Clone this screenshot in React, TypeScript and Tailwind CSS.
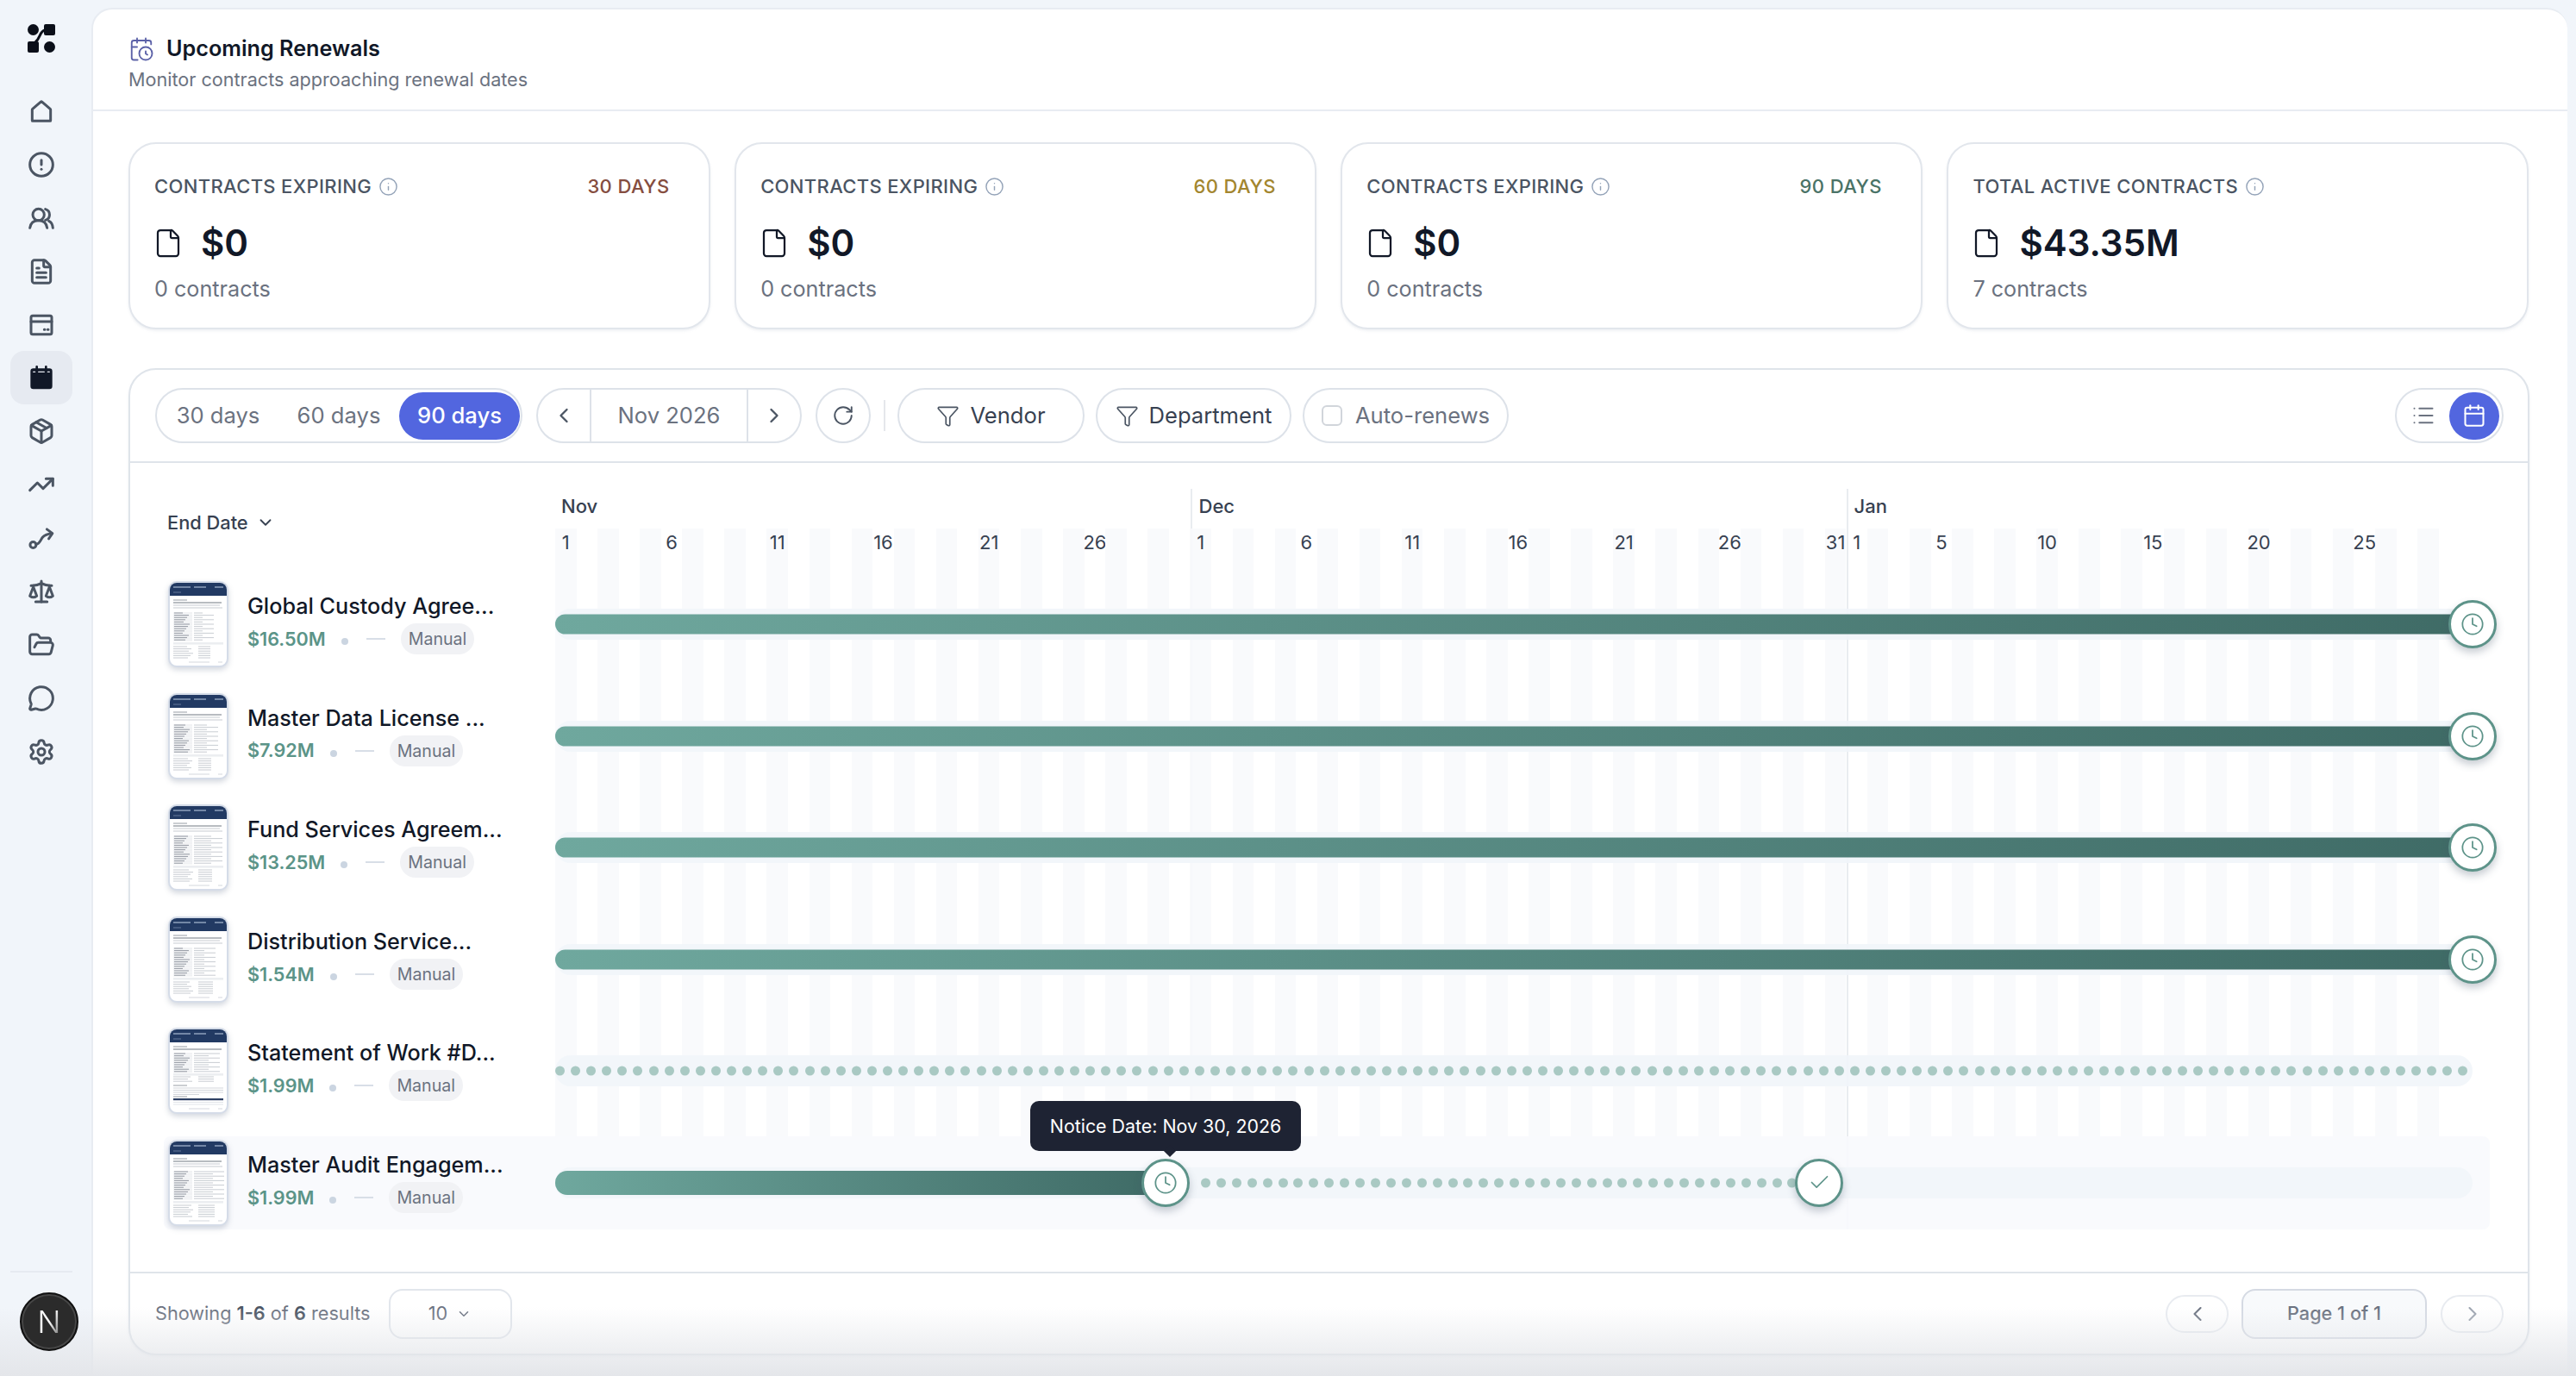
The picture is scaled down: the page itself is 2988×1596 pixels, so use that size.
import {
  CalendarClock,
  Check,
  ChevronDown,
  ChevronLeft,
  ChevronRight,
  CircleAlert,
  Clock,
  File,
  FileText,
  Filter,
  FolderOpen,
  Info,
  List,
  MessageCircle,
  Package,
  RotateCw,
  Scale,
  Settings,
  TrendingUp,
  Calendar,
} from 'lucide-react';

const DAY = 24.55;
const days = Array.from({ length: 90 }, (_, i) => i);
const dayLabels: Record<number, string> = {
  0: '1', 5: '6', 10: '11', 15: '16', 20: '21', 25: '26',
  30: '1', 35: '6', 40: '11', 45: '16', 50: '21', 55: '26', 60: '31',
  61: '1', 65: '5', 70: '10', 75: '15', 80: '20', 85: '25',
};

const rows = [
  { title: 'Global Custody Agree...', amount: '$16.50M', seed: 0 },
  { title: 'Master Data License ...', amount: '$7.92M', seed: 1 },
  { title: 'Fund Services Agreem...', amount: '$13.25M', seed: 2 },
  { title: 'Distribution Service...', amount: '$1.54M', seed: 3 },
  { title: 'Statement of Work #D...', amount: '$1.99M', seed: 4 },
  { title: 'Master Audit Engagem...', amount: '$1.99M', seed: 5 },
];

const stats = [
  { label: 'CONTRACTS EXPIRING', tag: '30 DAYS', tagColor: 'text-[#854d40]', value: '$0', count: '0 contracts' },
  { label: 'CONTRACTS EXPIRING', tag: '60 DAYS', tagColor: 'text-[#a3862f]', value: '$0', count: '0 contracts' },
  { label: 'CONTRACTS EXPIRING', tag: '90 DAYS', tagColor: 'text-[#4a7367]', value: '$0', count: '0 contracts' },
  { label: 'TOTAL ACTIVE CONTRACTS', tag: '', tagColor: '', value: '$43.35M', count: '7 contracts' },
];

const Logo = () => (
  <svg width="32" height="33" viewBox="0 0 32 33" fill="#0b0f19">
    <circle cx="6.5" cy="6.5" r="6.5" />
    <rect x="19" y="0" width="13" height="13" rx="2" />
    <rect x="0" y="20" width="13" height="13" rx="2" />
    <circle cx="25.5" cy="26.5" r="6.5" />
    <path d="M20 7c-6 1-5 9-11 14" fill="none" stroke="#0b0f19" strokeWidth="3" />
  </svg>
);

const navIcon = 'w-8 h-8 text-[#4b5563]';

const HomeIcon = () => (
  <svg className={navIcon} viewBox="0 0 24 24" fill="none" stroke="currentColor" strokeWidth="2.25" strokeLinejoin="round">
    <path d="M4.5 20.5h15a.5.5 0 0 0 .5-.5v-9.3a.8.8 0 0 0-.3-.6l-7.2-6.3a.8.8 0 0 0-1 0l-7.2 6.3a.8.8 0 0 0-.3.6V20a.5.5 0 0 0 .5.5z" />
  </svg>
);

const PeopleIcon = () => (
  <svg className={navIcon} viewBox="0 0 24 24" fill="none" stroke="currentColor" strokeWidth="2.25" strokeLinecap="round">
    <circle cx="9.5" cy="9" r="5" />
    <path d="M2 20.5c.5-3.8 3-6.5 7.5-6.5s7 2.7 7.5 6.5" />
    <path d="M15.5 4.2a5 5 0 0 1 0 9.6" />
    <path d="M18.5 14.6c2.1.9 3.2 3 3.5 5.9" />
  </svg>
);

const CardIcon = () => (
  <svg className={navIcon} viewBox="0 0 24 24" fill="none" stroke="currentColor" strokeWidth="2.25" strokeLinecap="round">
    <rect x="3" y="4" width="18" height="16" rx="1.5" />
    <path d="M3 9h18" />
    <path d="M14.5 16h.5M17.5 16h.5" />
  </svg>
);

const CalendarFilled = () => (
  <svg className="w-8 h-8" viewBox="0 0 24 24" fill="#111827" stroke="#111827" strokeWidth="2" strokeLinecap="round">
    <rect x="3.5" y="5" width="17" height="16" rx="1.5" />
    <path d="M8 2.5V6M16 2.5V6" />
    <path d="M5 7h1.5M9.5 7h5M17.5 7H19" stroke="#e6eaf1" strokeWidth="1" />
  </svg>
);

const RouteIcon = () => (
  <svg className={navIcon} viewBox="0 0 24 24" fill="none" stroke="currentColor" strokeWidth="2.25" strokeLinecap="round" strokeLinejoin="round">
    <circle cx="4.8" cy="18" r="2.6" />
    <path d="M7.4 17.5c3.4-.4 3.6-3.6 5.6-6 1.8-2.2 4.4-3 8-3.4" />
    <path d="M16.8 4.4 21.6 8l-3.2 4.6" />
  </svg>
);

const Thumb = ({ seed }: { seed: number }) => {
  const lines = Array.from({ length: 20 }, (_, i) => i);
  const sow = seed === 4;
  const start = sow ? 27 : 34;
  return (
    <div className="w-[70px] h-[100px] shrink-0 rounded-[10px] border-2 border-[#d5dce8] bg-white overflow-hidden shadow-[0_3px_6px_rgba(100,116,139,0.28)]">
      <svg width="66" height="96" viewBox="0 0 66 96" className="block">
        <rect width="66" height="15" fill="#223a63" />
        <path d="M4 5h20M28 5h14M52 5h10" stroke="#8fa1bd" strokeWidth="1.4" />
        <path d="M4 11h9" stroke="#64799c" strokeWidth="1" />
        <path d="M4 20h16" stroke="#6b7280" strokeWidth="0.7" />
        <path d="M4 23h56" stroke="#4b5563" strokeWidth="0.8" />
        {!sow && <path d="M4 26h54M4 29h57" stroke="#a3a9b4" strokeWidth="0.6" />}
        {lines.slice(0, sow ? 9 : 13).map((i) => (
          <g key={i}>
            <rect x="4" y={start + i * 2.6} width="22" height="2.4" fill="#f1f2f4" />
            <path d={`M5 ${start + 1 + i * 2.6}h${10 + ((i * 7 + seed * 3) % 9)}`} stroke="#6b7280" strokeWidth="0.7" />
            <path d={`M28 ${start + 1 + i * 2.6}h${10 + ((i * 13 + seed * 5) % 26)}`} stroke="#a3a9b4" strokeWidth="0.6" />
          </g>
        ))}
        <rect x="4" y={sow ? 51 : 69} width="58" height="2.6" fill="#eceef1" />
        {lines.slice(0, sow ? 3 : 6).map((i) => (
          <g key={i}>
            <path d={`M4 ${(sow ? 55 : 74) + i * 2.6}h${16 + ((i * 5 + seed) % 8)}`} stroke="#a3a9b4" strokeWidth="0.6" />
            <path d={`M33 ${(sow ? 55 : 74) + i * 2.6}h${14 + ((i * 9 + seed) % 9)}`} stroke="#a3a9b4" strokeWidth="0.6" />
          </g>
        ))}
        {sow && (
          <>
            <path d="M4 65h16" stroke="#6b7280" strokeWidth="0.7" />
            <path d="M4 68h58M4 70.5h58M4 73h58M4 75.5h30" stroke="#b6bbc4" strokeWidth="0.6" />
            <path d="M4 78h16" stroke="#6b7280" strokeWidth="0.7" />
            <rect x="4" y="80" width="58" height="2.2" fill="#2d3f63" />
            <path d="M4 84.5h58M4 87h58" stroke="#cfd3da" strokeWidth="0.6" />
          </>
        )}
        <path d="M22 92h24M56 92h5" stroke="#c1c6ce" strokeWidth="0.7" />
      </svg>
    </div>
  );
};

const Handle = ({ check, className }: { check?: boolean; className: string }) => (
  <div
    className={`absolute top-1/2 -translate-y-1/2 w-[56px] h-[56px] rounded-full bg-white border-[3.5px] border-[#5d9389] flex items-center justify-center text-[#5d9389] shadow-[0_5px_10px_rgba(71,85,105,0.3)] z-10 ${className}`}
  >
    {check ? <Check size={27} strokeWidth={1.5} /> : <Clock size={28} strokeWidth={1.5} />}
  </div>
);

const Dots = ({ count, className }: { count: number; className: string }) => (
  <div className={`absolute top-1/2 -translate-y-1/2 flex justify-between ${className}`}>
    {Array.from({ length: count }, (_, i) => (
      <span key={i} className="w-[11px] h-[11px] rounded-full bg-[#a9c9c3]" />
    ))}
  </div>
);

const FullBar = () => (
  <>
    <div className="absolute left-0 right-0 top-1/2 -translate-y-1/2 h-[23px] rounded-l-full bg-linear-to-r from-[#6fa89e] to-[#3f6b66]" />
    <Handle className="-right-[28px]" />
  </>
);

const StatCard = ({ label, tag, tagColor, value, count }: (typeof stats)[number]) => (
  <div className="flex-1 h-[217px] rounded-[32px] border-2 border-[#e2e6ec] bg-white pl-[28px] pr-[45px] pt-[34px] shadow-[0_2px_3px_rgba(148,163,184,0.15)]">
    <div className="flex items-center justify-between h-[30px]">
      <div className="flex items-center gap-[8px] text-[22px] font-medium tracking-[0.35px] text-[#4b5563]">
        {label}
        <Info size={23} strokeWidth={1.5} className="text-[#94a3b8]" />
      </div>
      {tag && <span className={`text-[22px] font-medium tracking-[0.4px] ${tagColor}`}>{tag}</span>}
    </div>
    <div className="flex items-center gap-[20px] mt-[26px] h-[50px]">
      <File size={36} strokeWidth={1.5} className="text-[#111827] -ml-[2px]" />
      <span className="text-[42px] leading-none font-semibold text-[#111827]">{value}</span>
    </div>
    <div className="mt-[9px] text-[25.2px] leading-[39px] text-[#6b7280]">{count}</div>
  </div>
);

export default function App() {
  return (
    <div className="relative flex w-[2988px] h-[1596px] overflow-hidden bg-[#f1f5fa] font-[Inter,sans-serif]">
      {/* Sidebar */}
      <aside className="w-[106px] shrink-0 flex flex-col items-center relative">
        <div className="h-[101px] pt-[28px] -ml-[10px]">
          <Logo />
        </div>
        <nav className="flex flex-col items-center w-[72px] -ml-[10px]">
          {[
            <HomeIcon key="a" />,
            <CircleAlert key="b" className={navIcon} strokeWidth={2.25} />,
            <PeopleIcon key="c" />,
            <FileText key="d" className={navIcon} strokeWidth={2.25} />,
            <CardIcon key="e" />,
          ].map((icon, i) => (
            <div key={i} className="h-[61.9px] w-full flex items-center justify-center -mt-[3px] mb-[3px]">
              {icon}
            </div>
          ))}
          <div className="h-[61.9px] w-full flex items-center justify-center rounded-2xl bg-[#e6eaf1] -mt-[3px] mb-[3px]">
            <CalendarFilled />
          </div>
          {[
            <Package key="f" className={navIcon} strokeWidth={2.25} />,
            <TrendingUp key="g" className={navIcon} strokeWidth={2.25} />,
            <RouteIcon key="h" />,
            <Scale key="i" className={navIcon} strokeWidth={2.25} />,
            <FolderOpen key="j" className={navIcon} strokeWidth={2.25} />,
            <MessageCircle key="k" className={navIcon} strokeWidth={2.25} />,
            <Settings key="l" className={navIcon} strokeWidth={2.25} />,
          ].map((icon, i) => (
            <div key={i} className="h-[61.9px] w-full flex items-center justify-center -mt-[3px] mb-[3px]">
              {icon}
            </div>
          ))}
        </nav>
        <div className="mt-auto mb-[29px] w-[72px] -ml-[10px] border-t-2 border-[#e6eaf1] pt-[23px] relative z-10">
          <div className="ml-[11px] w-[68px] h-[68px] rounded-full bg-[#2b2b2b] border-2 border-[#111111] shadow-[inset_0_0_0_2px_#474747] flex items-center justify-center text-[36px] font-light">
            <span className="bg-linear-to-br from-white via-white to-white/10 bg-clip-text text-transparent">N</span>
          </div>
        </div>
      </aside>

      {/* Main */}
      <main className="flex-1 mt-[9px] mr-[10px] flex flex-col min-w-0 bg-white rounded-t-[24px] border-l-2 border-t-2 border-[#e8ecf2]">
        <header className="h-[118px] shrink-0 border-b-2 border-[#e8ecf2] pl-[41px] pt-[26px]">
          <div className="flex items-center gap-[14px] h-[40px]">
            <CalendarClock size={30} strokeWidth={1.5} className="text-[#5c62a8]" />
            <h1 className="text-[25.2px] font-semibold text-[#111827]">Upcoming Renewals</h1>
          </div>
          <p className="text-[21.6px] leading-[30px] text-[#6b7280]">Monitor contracts approaching renewal dates</p>
        </header>

        <div className="flex-1 min-h-0 flex flex-col pl-[41px] pr-[44px] pt-[36px] pb-[24px]">
          <div className="flex gap-[28.5px] pr-[1px]">
            {stats.map((s) => (
              <StatCard key={s.tag || s.label} {...s} />
            ))}
          </div>

          <section className="mt-[45px] flex-1 min-h-0 flex flex-col rounded-[32px] border-2 border-[#dfe4ea] bg-white shadow-[0_2px_3px_rgba(148,163,184,0.15)]">
            {/* Toolbar */}
            <div className="h-[108px] shrink-0 flex items-center pl-[29px] pr-[28px] border-b-2 border-[#dfe4ea] text-[25.6px] text-[#6b7280]">
              <div className="w-[426px] h-[64px] rounded-full border-2 border-[#dde2e9] flex items-center px-[1px]">
                <button className="w-[140px] h-[55px]">30 days</button>
                <button className="w-[140px] h-[55px]">60 days</button>
                <button className="w-[140px] h-[55px] rounded-full bg-[#5266df] text-white font-medium">90 days</button>
              </div>
              <div className="ml-[16px] w-[308px] h-[64px] rounded-full border-2 border-[#dde2e9] flex items-center">
                <button className="w-[62px] h-full flex items-center justify-center border-r-2 border-[#dde2e9]">
                  <ChevronLeft size={28} strokeWidth={2} className="text-[#4b5563]" />
                </button>
                <span className="flex-1 text-center">Nov 2026</span>
                <button className="w-[62px] h-full flex items-center justify-center border-l-2 border-[#dde2e9]">
                  <ChevronRight size={28} strokeWidth={2} className="text-[#4b5563]" />
                </button>
              </div>
              <button className="ml-[16px] w-[64px] h-[64px] rounded-full border-2 border-[#dde2e9] flex items-center justify-center">
                <RotateCw size={26} strokeWidth={1.75} className="text-[#4b5563]" />
              </button>
              <div className="ml-[15px] w-[2px] h-[36px] bg-[#e5e7eb]" />
              <button className="ml-[14px] w-[217px] h-[64px] rounded-full border-2 border-[#dde2e9] flex items-center justify-center gap-[12px] text-[#374151]">
                <Filter size={27} strokeWidth={1.5} className="text-[#4b5563]" />
                Vendor
              </button>
              <button className="ml-[13px] w-[227px] h-[64px] rounded-full border-2 border-[#dde2e9] flex items-center justify-center gap-[12px] text-[#374151]">
                <Filter size={27} strokeWidth={1.5} className="text-[#4b5563]" />
                Department
              </button>
              <button className="ml-[13px] w-[239px] h-[64px] rounded-full border-2 border-[#dde2e9] flex items-center justify-center gap-[15px]">
                <span className="w-[24px] h-[24px] rounded-md border-2 border-[#d1d5db] bg-white" />
                Auto-renews
              </button>
              <div className="ml-auto w-[126px] h-[64px] rounded-full border-2 border-[#dde2e9] flex items-center pl-[17px] pr-[3px] justify-between">
                <List size={28} strokeWidth={1.75} className="text-[#6b7280]" />
                <span className="w-[58px] h-[55px] rounded-full bg-[#5266df] flex items-center justify-center">
                  <Calendar size={28} strokeWidth={1.75} className="text-white" />
                </span>
              </div>
            </div>

            {/* Timeline */}
            <div className="relative flex-1 min-h-0">
              {/* month columns sit behind the rows */}
              <div className="absolute left-[493px] top-[30px] h-[859px] flex text-[22px] font-medium text-[#374151]">
                <div className="w-[736.5px] pl-[7px] pt-[4px] leading-[32px]">Nov</div>
                <div className="w-[761px] pl-[8px] pt-[4px] leading-[32px] border-l-2 border-[#e9ecf0]">Dec</div>
                <div className="w-[712px] pl-[7px] pt-[4px] leading-[32px] border-l-2 border-[#e9ecf0]">Jan</div>
              </div>
              {/* day stripes */}
              <div className="absolute left-[493px] top-[76px] h-[813px] flex text-[22px] text-[#374151]">
                {days.map((d) => (
                  <div
                    key={d}
                    className={`h-full shrink-0 flex justify-center whitespace-nowrap leading-[33px] ${d % 2 === 0 && d < 89 ? 'bg-[#f8fafc]/90' : ''}`}
                    style={{ width: DAY }}
                  >
                    {dayLabels[d]}
                  </div>
                ))}
              </div>

              <div className="relative pl-[43px] pt-[54px] h-[133px]">
                <button className="flex items-center gap-[9px] text-[21.8px] leading-[30px] font-medium text-[#374151]">
                  End Date
                  <ChevronDown size={22} strokeWidth={2} />
                </button>
              </div>

              <div className="relative flex flex-col gap-[21.6px] ml-[39px] w-[2698px]">
                {rows.map((row, i) => (
                  <div
                    key={row.title + i}
                    className={`h-[108px] flex items-center rounded-lg ${i === 5 ? 'bg-[#f8fafd]/90' : ''}`}
                  >
                    <div className="w-[454px] shrink-0 flex items-center gap-[22px] pl-[5px]">
                      <Thumb seed={row.seed} />
                      <div className="min-w-0 -mt-[3px]">
                        <div className="text-[25.2px] leading-[34px] font-medium text-[#111827] whitespace-nowrap">{row.title}</div>
                        <div className="flex items-center mt-[3px] h-[36px]">
                          <span className="text-[21.6px] font-semibold text-[#5b9488]">{row.amount}</span>
                          <span className="ml-[18px] mt-[6px] w-[8px] h-[8px] rounded-full bg-[#cbd5e1]" />
                          <span className="ml-[21px] w-[22px] h-[2px] bg-[#d8dee7]" />
                          <span className="ml-[18px] h-[36px] px-[9px] rounded-full bg-[#f1f2f5] text-[19.6px] leading-[36px] text-[#6b7280]">Manual</span>
                        </div>
                      </div>
                    </div>
                    <div className="relative w-[2224px] h-[36px] rounded-full bg-[#f1f5f9]/90">
                      {i < 4 && <FullBar />}
                      {i === 4 && <Dots count={123} className="left-0 right-[4px]" />}
                      {i === 5 && (
                        <>
                          <div className="absolute left-0 top-1/2 -translate-y-1/2 w-[700px] h-[28px] rounded-l-full bg-linear-to-r from-[#6fa89e] to-[#3f6b66]" />
                          <Dots count={39} className="left-[749px] w-[692px]" />
                          <Handle className="left-[680px]" />
                          <Handle check className="left-[1438px]" />
                          <div className="absolute left-[551px] -top-[77px] w-[314px] h-[58px] rounded-[10px] bg-[#1e2333] text-white text-[21.4px] flex items-center justify-center whitespace-nowrap z-20">
                            Notice Date: Nov 30, 2026
                            <span className="absolute -bottom-[5px] left-[157px] w-[10px] h-[10px] rotate-45 bg-[#1e2333]" />
                          </div>
                        </>
                      )}
                    </div>
                  </div>
                ))}
              </div>
            </div>

            {/* Footer */}
            <div className="h-[95px] shrink-0 border-t-2 border-[#dfe4ea] flex items-center pl-[29px] pr-[28px] text-[21.7px] text-[#6b7280]">
              <span>
                Showing <b className="font-semibold text-[#4b5563]">1-6</b> of <b className="font-semibold text-[#4b5563]">6</b> results
              </span>
              <div className="ml-[21px] w-[143px] h-[58px] rounded-2xl border-2 border-[#e2e6ec] flex items-center justify-center gap-[10px]">
                10
                <ChevronDown size={18} strokeWidth={2} />
              </div>
              <button className="ml-auto w-[73px] h-[44px] rounded-full border-2 border-[#e8ebf0] flex items-center justify-center">
                <ChevronLeft size={28} strokeWidth={1.75} className="text-[#6b7280]" />
              </button>
              <div className="ml-[15px] w-[215px] h-[58px] rounded-2xl border-2 border-[#d5dae3] bg-[#f8fafc] flex items-center justify-center text-[#6b7280] font-medium">
                Page 1 of 1
              </div>
              <button className="ml-[16px] w-[73px] h-[44px] rounded-full border-2 border-[#e8ebf0] flex items-center justify-center">
                <ChevronRight size={28} strokeWidth={1.75} className="text-[#9ca3af]" />
              </button>
            </div>
          </section>
        </div>
      </main>

      {/* fade along the bottom of the window */}
      <div className="absolute left-0 right-0 bottom-0 h-[80px] bg-linear-to-b from-transparent to-[#e4e6ea] pointer-events-none" />
    </div>
  );
}
